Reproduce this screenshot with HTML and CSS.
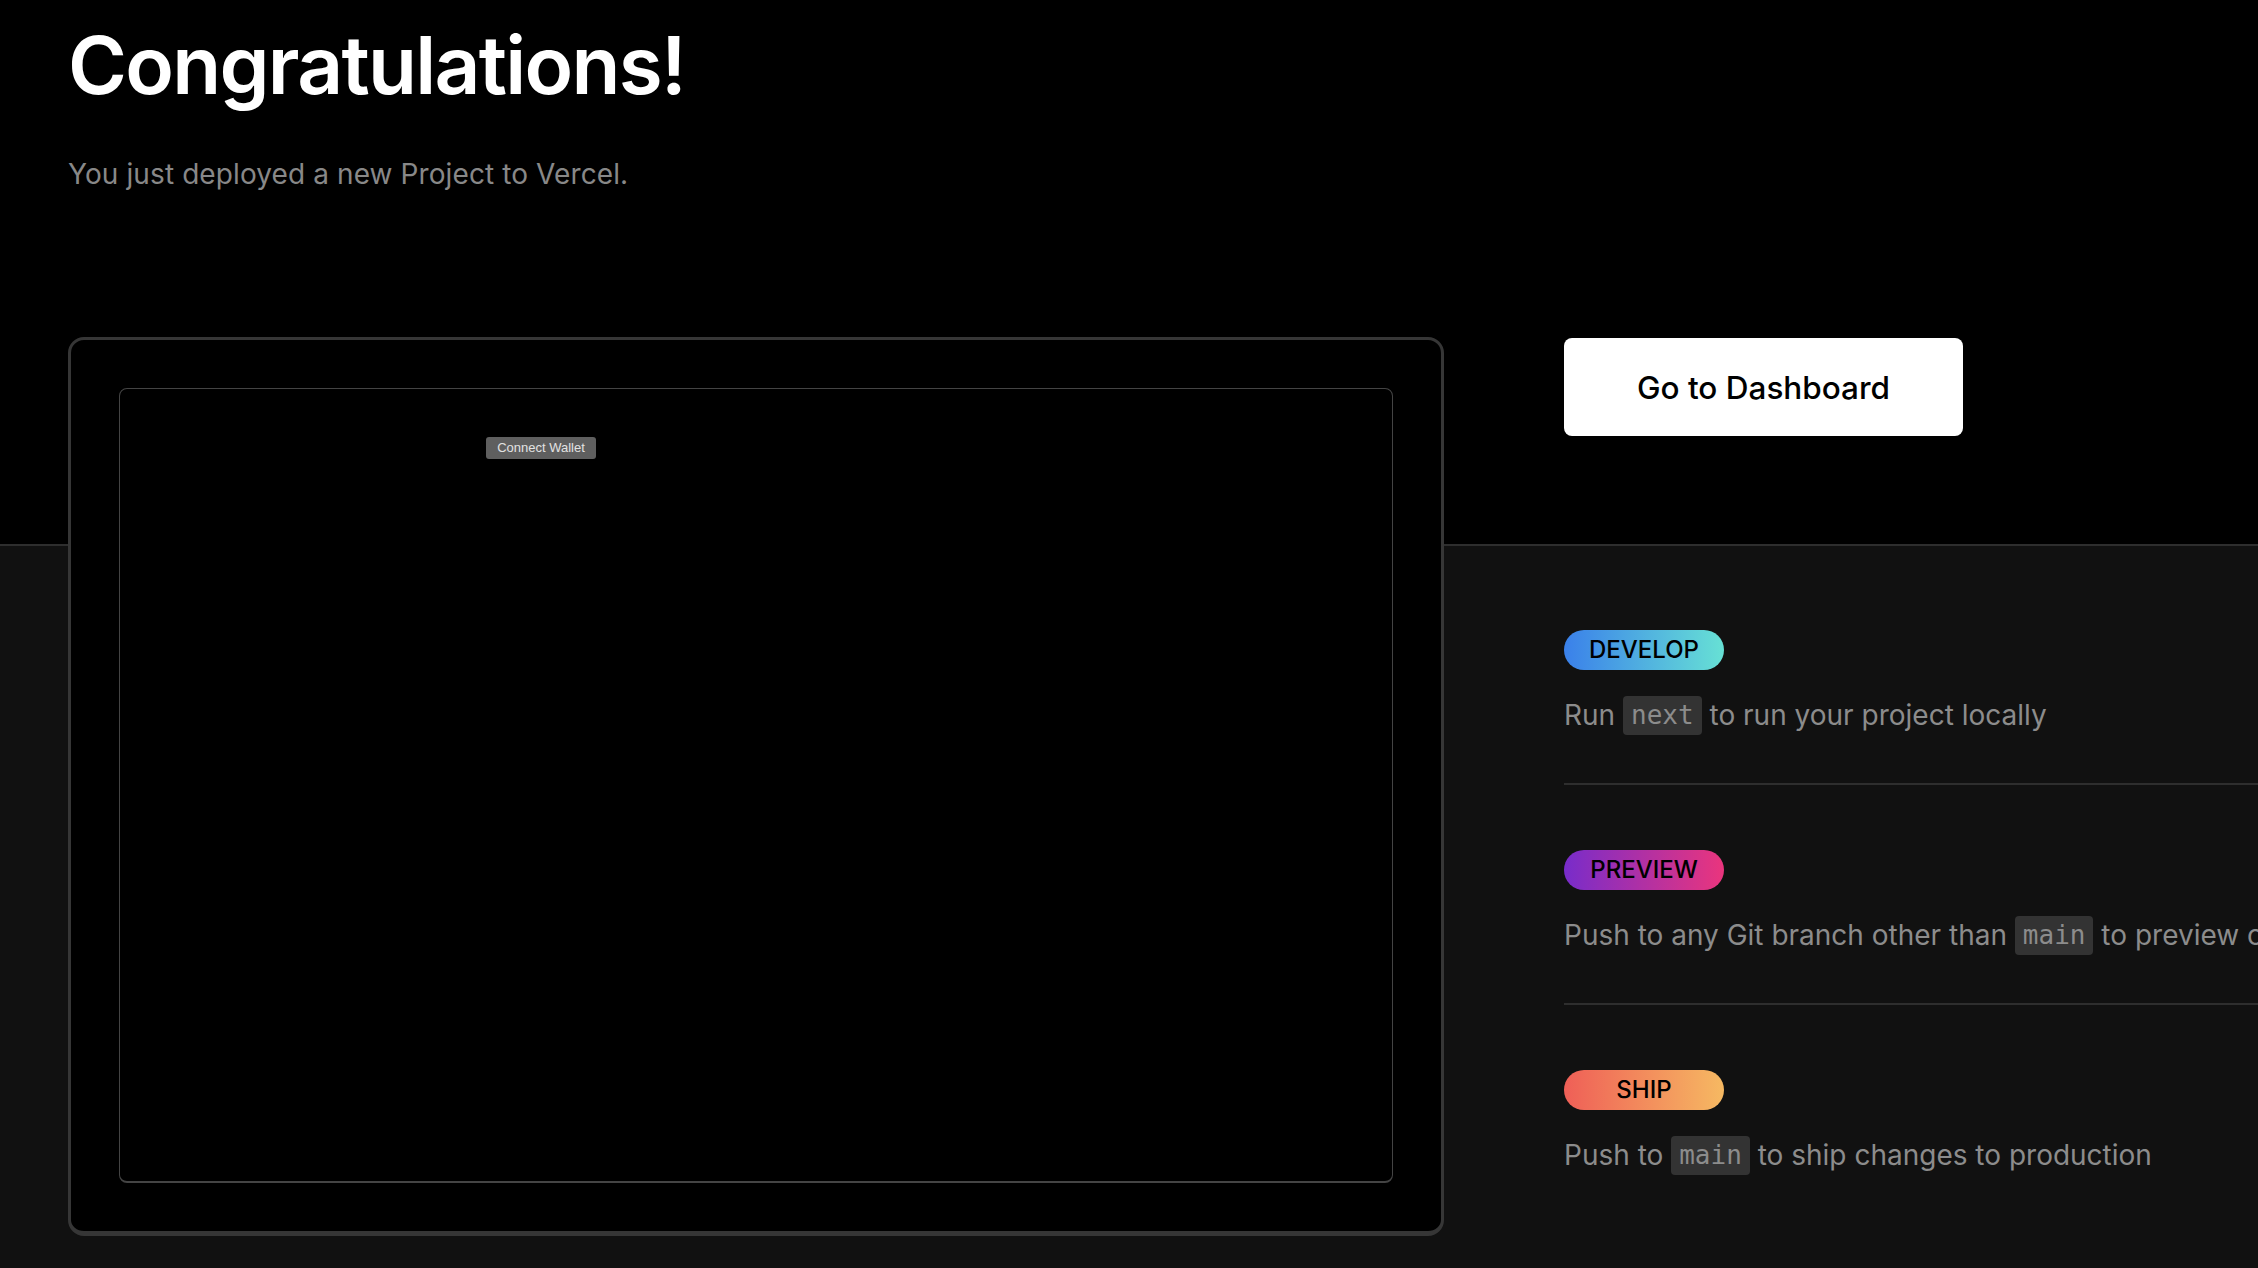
FILE: index.html
```
<!DOCTYPE html>
<html lang="en">
<head>
<meta charset="utf-8">
<title>Congratulations!</title>
<link rel="stylesheet" href="styles.css">
</head>
<body>
<main class="page">
  <header class="hero">
    <h1 class="hero-title">Congratulations!</h1>
    <p class="hero-sub">You just deployed a new Project to Vercel.</p>
  </header>
  <section class="stage">
    <div class="preview">
      <div class="preview-screen">
        <button class="wallet-btn" type="button">Connect Wallet</button>
      </div>
    </div>
    <aside class="side">
      <a class="dash-btn" href="#">Go to Dashboard</a>
      <ul class="steps">
        <li class="step">
          <span class="badge badge-develop">DEVELOP</span>
          <p class="step-text">Run <code class="chip">next</code> to run your project locally</p>
        </li>
        <li class="step">
          <span class="badge badge-preview">PREVIEW</span>
          <p class="step-text">Push to any Git branch other than <code class="chip">main</code> to preview changes</p>
        </li>
        <li class="step">
          <span class="badge badge-ship">SHIP</span>
          <p class="step-text">Push to <code class="chip">main</code> to ship changes to production</p>
        </li>
      </ul>
    </aside>
  </section>
</main>
</body>
</html>
```
FILE: styles.css
```
html, body {
  margin: 0;
  padding: 0;
  overflow: hidden;
}
body {
  background: #111111;
  font-family: Inter, "Noto Sans", "Liberation Sans", sans-serif;
  color: #fff;
  width: 2258px;
  height: 1268px;
}
.page {
  display: flex;
  flex-direction: column;
}
.hero {
  background: #000;
  box-sizing: content-box;
  height: 523px;
  padding: 21px 68px 0;
  border-bottom: 2px solid #2e2e2e;
}
.hero-title {
  margin: 0;
  font-size: 80px;
  line-height: 88px;
  font-weight: 600;
  letter-spacing: -1.7px;
  color: #fff;
}
.hero-sub {
  margin: 45px 0 0;
  font-size: 28px;
  line-height: 40px;
  letter-spacing: 0.1px;
  color: #888888;
  font-weight: 400;
}
.stage {
  display: flex;
  align-items: flex-start;
  gap: 120px;
  padding-left: 68px;
  margin-top: -209px;
}
.preview {
  flex: none;
  width: 1376px;
  height: 899px;
  box-sizing: border-box;
  background: #000;
  border: 3px solid #363636;
  border-bottom-width: 5px;
  border-radius: 16px;
  padding: 48px;
}
.preview-screen {
  height: 100%;
  box-sizing: border-box;
  border: 1px solid #444;
  border-bottom-width: 2px;
  border-radius: 8px;
  padding: 48px 0 0 366px;
}
.wallet-btn {
  display: block;
  width: 110px;
  height: 22px;
  padding: 0;
  border: none;
  border-radius: 3px;
  background: #5f5f5f;
  color: #e2e2e2;
  font-family: "Liberation Sans", Arial, sans-serif;
  font-size: 13px;
  line-height: 22px;
  text-align: center;
}
.side {
  flex: 1;
  min-width: 0;
  display: flex;
  flex-direction: column;
  padding-top: 1px;
}
.dash-btn {
  display: flex;
  align-items: center;
  justify-content: center;
  width: 399px;
  height: 98px;
  background: #fff;
  color: #000;
  border-radius: 8px;
  text-decoration: none;
  font-size: 31.5px;
  font-weight: 500;
}
.steps {
  list-style: none;
  margin: 194px 0 0;
  padding: 0;
}
.step {
  display: flex;
  flex-direction: column;
  align-items: flex-start;
  padding: 0 0 48px;
  border-bottom: 2px solid #2e2e2e;
}
.step + .step {
  padding-top: 65px;
}
.step:last-child {
  border-bottom: none;
}
.badge {
  display: block;
  width: 160px;
  height: 40px;
  line-height: 40px;
  border-radius: 20px;
  text-align: center;
  color: #000;
  font-size: 24px;
  font-weight: 500;
}
.badge-develop {
  background: linear-gradient(90deg, #3a80ea, #67e1d5);
}
.badge-preview {
  background: linear-gradient(90deg, #782cca, #ea357d);
}
.badge-ship {
  background: linear-gradient(90deg, #ef5f57, #f6b962);
}
.step-text {
  margin: 26px 0 0;
  font-size: 28px;
  line-height: 39px;
  color: #8c8c8c;
  white-space: nowrap;
}
.chip {
  display: inline-block;
  vertical-align: top;
  font-family: "DejaVu Sans Mono", "Liberation Mono", monospace;
  font-size: 26px;
  line-height: 39px;
  padding: 0 8px;
  border-radius: 4px;
  background: #333333;
  color: #8c8c8c;
}
```
